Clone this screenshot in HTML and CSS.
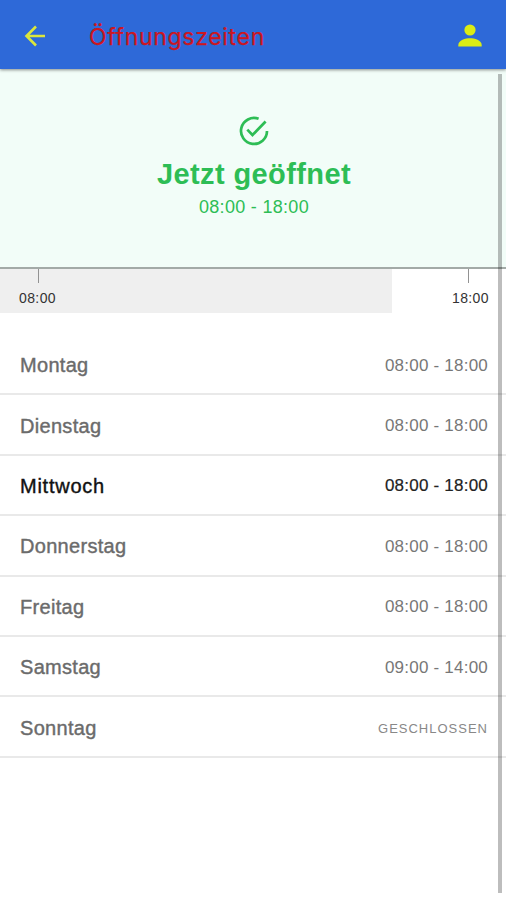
FILE: index.html
```html
<!DOCTYPE html>
<html lang="de">
<head>
<meta charset="utf-8">
<title>Öffnungszeiten</title>
<link rel="stylesheet" href="styles.css">
</head>
<body>
<header class="bar">
  <svg class="back" viewBox="0 0 22 22"><path d="M21 11H2.500M12 1.500L2.500 11l9.500 9.500"/></svg>
  <h1 class="title">Öffnungszeiten</h1>
  <svg class="user" viewBox="0 0 24 24"><circle cx="12" cy="6" r="5.6"/><path d="M.3 22.600v-1.600C.3 16 7.600 14.200 12 14.200s11.700 1.800 11.700 6.800v1.600z"/></svg>
</header>
<main>
  <section class="status">
    <svg class="check" viewBox="0 0 30 30"><path d="M19.600 2.800A13 13 0 1 0 28 15M8.300 13.600l5.200 5.400L26.600 5.500"/></svg>
    <h2 class="state">Jetzt geöffnet</h2>
    <p class="today">08:00 - 18:00</p>
  </section>
  <section class="timeline">
    <div class="elapsed"></div>
    <div class="mark">08:00</div>
    <div class="mark">18:00</div>
  </section>
  <ul class="days">
    <li class="day"><span class="name">Montag</span><span class="time">08:00 - 18:00</span></li>
    <li class="day"><span class="name">Dienstag</span><span class="time">08:00 - 18:00</span></li>
    <li class="day current"><span class="name">Mittwoch</span><span class="time">08:00 - 18:00</span></li>
    <li class="day"><span class="name">Donnerstag</span><span class="time">08:00 - 18:00</span></li>
    <li class="day"><span class="name">Freitag</span><span class="time">08:00 - 18:00</span></li>
    <li class="day"><span class="name">Samstag</span><span class="time">09:00 - 14:00</span></li>
    <li class="day"><span class="name">Sonntag</span><span class="closed">GESCHLOSSEN</span></li>
  </ul>
</main>
<div class="scrollbar"></div>
</body>
</html>
```
FILE: styles.css
```css
* { box-sizing: border-box; margin: 0; padding: 0; }
body {
  position: relative;
  height: 900px;
  overflow: hidden;
  background: #fff;
  font-family: "Liberation Sans", Arial, sans-serif;
}
.bar {
  position: relative;
  z-index: 1;
  display: flex;
  align-items: center;
  height: 69px;
  padding: 2px 24px 0;
  background: #2e69d8;
  box-shadow: 0 1px 3px rgba(0, 0, 0, .45);
}
.back { width: 22px; height: 22px; fill: none; stroke: #dbe63c; stroke-width: 2.6; }
.title {
  flex: 1;
  margin: 2px 0 0 43px;
  color: #cc1620;
  font: 400 23px/30px Inter, sans-serif;
  letter-spacing: .68px;
  -webkit-text-stroke: .25px currentColor;
}
.user { width: 24px; height: 24px; fill: #dcec14; }
.status {
  display: flex;
  flex-direction: column;
  align-items: center;
  height: 200px;
  padding: 47px 0 0 2px;
  background: #f2fdf8;
  border-bottom: 2px solid #a3aaa7;
  color: #2dbd55;
}
.check { width: 30px; height: 30px; fill: none; stroke: currentColor; stroke-width: 2.7; }
.state { margin-top: 11px; font-size: 29px; line-height: 34px; letter-spacing: .4px; }
.today { margin-top: 5px; font-size: 18px; line-height: 22px; letter-spacing: .3px; }
.timeline {
  position: relative;
  display: flex;
  justify-content: space-between;
  height: 66px;
  padding: 0 17px 0 19px;
}
.elapsed { position: absolute; left: 0; top: 0; width: 392px; height: 44px; background: #efefef; }
.mark {
  position: relative;
  display: flex;
  flex-direction: column;
  align-items: center;
  color: #333;
  font-size: 14px;
  line-height: 16px;
  letter-spacing: .4px;
}
.mark::before { content: ""; width: 1px; height: 14px; margin: 0 0 7px 1px; background: #929292; }
.mark:last-child::before { margin-left: -3px; }
.days { list-style: none; }
.day {
  display: flex;
  align-items: center;
  justify-content: space-between;
  height: 60.4px;
  padding: 2px 18px 0 20px;
  border-bottom: 2px solid #e9e9e9;
  color: #6b6b6b;
}
.name { font-size: 20px; line-height: 24px; letter-spacing: .3px; -webkit-text-stroke: .4px currentColor; }
.time { padding-top: 1px; color: #777; font-size: 17px; line-height: 20px; letter-spacing: .22px; }
.closed { padding-top: 2px; color: #888; font-size: 13px; letter-spacing: 1px; }
.current .name { color: #111; letter-spacing: .75px; }
.current .time { color: #222; -webkit-text-stroke: .2px currentColor; }
.scrollbar {
  position: absolute;
  z-index: 2;
  top: 74px;
  left: 498px;
  width: 4px;
  height: 819px;
  background: rgba(0, 0, 0, .26);
}
```
